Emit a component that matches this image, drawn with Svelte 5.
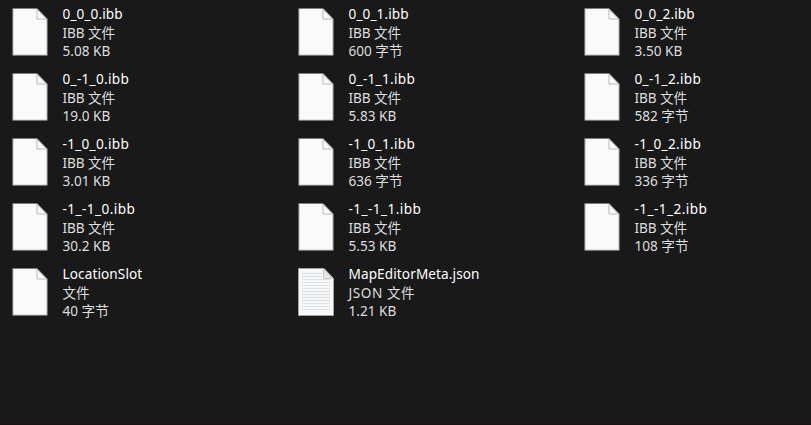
<script>
  const files = [
    { name: '0_0_0.ibb', type: 'IBB 文件', size: '5.08 KB' },
    { name: '0_0_1.ibb', type: 'IBB 文件', size: '600 字节' },
    { name: '0_0_2.ibb', type: 'IBB 文件', size: '3.50 KB' },
    { name: '0_-1_0.ibb', type: 'IBB 文件', size: '19.0 KB' },
    { name: '0_-1_1.ibb', type: 'IBB 文件', size: '5.83 KB' },
    { name: '0_-1_2.ibb', type: 'IBB 文件', size: '582 字节' },
    { name: '-1_0_0.ibb', type: 'IBB 文件', size: '3.01 KB' },
    { name: '-1_0_1.ibb', type: 'IBB 文件', size: '636 字节' },
    { name: '-1_0_2.ibb', type: 'IBB 文件', size: '336 字节' },
    { name: '-1_-1_0.ibb', type: 'IBB 文件', size: '30.2 KB' },
    { name: '-1_-1_1.ibb', type: 'IBB 文件', size: '5.53 KB' },
    { name: '-1_-1_2.ibb', type: 'IBB 文件', size: '108 字节' },
    { name: 'LocationSlot', type: '文件', size: '40 字节' },
    { name: 'MapEditorMeta.json', type: 'JSON 文件', size: '1.21 KB', lined: true }
  ];
  const rules = Array.from({ length: 13 }, (_, i) => 5.5 + i * 3);

  const tracking = (name) => {
    const hyphens = name.split('-').length - 1;
    return 0.1 + (hyphens * 1.9) / name.length;
  };
</script>

<main class="explorer">
  <div class="files">
    {#each files as file (file.name)}
      <article class="file">
        <svg class="icon" width="36" height="48" viewBox="0 0 36 48" aria-hidden="true">
          {#if file.lined}
            <path d="M.5.5H26L35.5 10.5V47.5H.5Z" fill="#f7f8f9" stroke="#a5a5a5" />
            {#each rules as y, i}
              <path d="M4 {y}H{i < 2 ? 24 : 32}" stroke="#dcdedf" />
            {/each}
            <path d="M25.5 1V10.5H35Z" fill="#e6e6e8" stroke="#cacacc" />
          {:else}
            <path d="M.8.5H25L35.2 11V47.3H.8Z" fill="#fafafa" stroke="#7c7c7c" />
            <path d="M25 1.3V11H34.6Z" fill="#fafafa" stroke="#b9b9b9" />
          {/if}
        </svg>
        <div class="details">
          <div class="name" style:letter-spacing="{tracking(file.name)}px">{file.name}</div>
          <div class="meta" class:wide={file.type.startsWith('JSON')} class:tight={file.type.startsWith('IBB')}>{file.type}</div>
          <div class="meta">{file.size}</div>
        </div>
      </article>
    {/each}
  </div>
  <footer></footer>
</main>

<style>
  :global(body) {
    margin: 0;
    background: #191919;
  }
  .explorer {
    box-sizing: border-box;
    width: 811px;
    height: 425px;
    overflow: hidden;
    display: flex;
    flex-direction: column;
    justify-content: space-between;
    background: #191919;
    font-family: 'Noto Sans', 'Noto Sans CJK SC', sans-serif;
    font-size: 13.6px;
  }
  .files {
    display: grid;
    grid-template-columns: repeat(3, 286px);
    grid-auto-rows: 65px;
    padding: 4px 0 0 12px;
  }
  .file {
    display: flex;
    gap: 14.5px;
  }
  .icon {
    flex: none;
    margin-top: 4px;
  }
  .details {
    white-space: nowrap;
  }
  .name,
  .meta {
    height: 18.7px;
    line-height: 19px;
  }
  .name {
    color: #fff;
  }
  .meta {
    color: #dedede;
  }
  .tight {
    letter-spacing: -0.08px;
  }
  .wide {
    letter-spacing: 0.55px;
  }
  footer {
    height: 1px;
    background: #181215;
  }
</style>
